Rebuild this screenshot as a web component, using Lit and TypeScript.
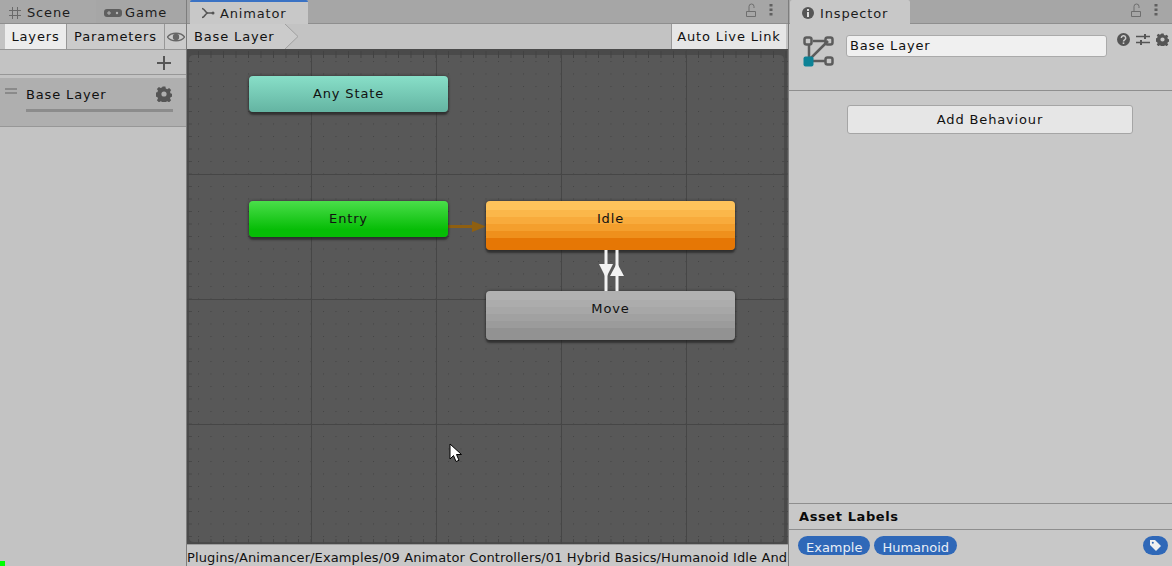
import { css, html, LitElement, svg } from "lit";
import { customElement } from "lit/decorators.js";

const gearIcon = (size: number) => html`
  <svg width="${size}" height="${size}" viewBox="0 0 16 16">
    <path
      fill="#555"
      fill-rule="evenodd"
      d="M6.600 0.500h2.800l.4 2 1.500.7 1.800-1.100 2 2-1.100 1.800.7 1.500 2 .4v2.800l-2 .4-.7 1.500 1.100 1.800-2 2-1.800-1.100-1.500.7-.4 2H6.600l-.4-2-1.500-.7-1.800 1.100-2-2 1.100-1.800-.7-1.500-2-.4V6.600l2-.4.7-1.500-1.100-1.800 2-2 1.800 1.100 1.500-.7zM8 5.400a2.600 2.600 0 1 0 0 5.200 2.600 2.600 0 0 0 0-5.200z"
    ></path>
  </svg>
`;

const lockIcon = html`
  <svg width="12" height="14" viewBox="0 0 12 14">
    <path d="M1.500 8.500h9v5h-9z M4 8V3.500a2.500 2.500 0 0 1 5 0V5" fill="none" stroke="#6e6e6e" stroke-width="1"></path>
  </svg>
`;

const dotsIcon = html`
  <svg width="4" height="12" viewBox="0 0 4 12">
    <rect x="0.500" y="0" width="3" height="2.500" fill="#5f5f5f"></rect>
    <rect x="0.500" y="4.500" width="3" height="2.500" fill="#5f5f5f"></rect>
    <rect x="0.500" y="9" width="3" height="2.500" fill="#5f5f5f"></rect>
  </svg>
`;

@customElement("graph-canvas")
class GraphCanvas extends LitElement {
  static styles = css`
    :host {
      display: block;
      position: relative;
      flex: 1;
      min-height: 0;
      background: #585858;
      overflow: hidden;
    }

    svg.layer {
      position: absolute;
      inset: 0;
      width: 100%;
      height: 100%;
    }

    .node {
      position: absolute;
      display: flex;
      justify-content: center;
      box-sizing: border-box;
      border-radius: 4px;
      color: #111;
      font-size: 13px;
      line-height: 15px;
      box-shadow: 0 3px 2px rgba(30, 30, 30, 0.6), 0 0 3px rgba(30, 30, 30, 0.7);
    }

    .any {
      left: 62px;
      top: 26px;
      width: 199px;
      height: 36px;
      padding-top: 10px;
      background: linear-gradient(#88dfc8, #64b4a2);
    }

    .entry {
      left: 62px;
      top: 151px;
      width: 199px;
      height: 36px;
      padding-top: 10px;
      background: linear-gradient(#4ade4a, #06bd06 80%);
    }

    .idle {
      left: 299px;
      top: 151px;
      width: 249px;
      height: 49px;
      padding-top: 10px;
      background: linear-gradient(
        #fec35b 0 18%,
        #fbb74a 18% 33%,
        #f8ab3c 33% 47%,
        #f49f2d 47% 61%,
        #ef901c 61% 75%,
        #e67705 75% 100%
      );
    }

    .move {
      left: 299px;
      top: 241px;
      width: 249px;
      height: 49px;
      padding-top: 10px;
      background: linear-gradient(
        #b1b1b1 0 18%,
        #acacac 18% 33%,
        #a7a7a7 33% 47%,
        #a1a1a1 47% 61%,
        #9b9b9b 61% 75%,
        #929292 75% 100%
      );
    }

    .cursor {
      position: absolute;
      left: 262px;
      top: 393px;
    }
  `;

  render() {
    return html`
      <svg class="layer" aria-hidden="true">
        <defs>
          <pattern id="minor" x="10" y="10" width="12.500" height="12.500" patternUnits="userSpaceOnUse">
            <rect x="1" y="1" width="1" height="1" fill="#414141"></rect>
          </pattern>
          <pattern id="ticks-x" x="11" y="0" width="12.500" height="494" patternUnits="userSpaceOnUse">
            <rect x="0" y="1" width="1" height="7" fill="#424242"></rect>
            <rect x="0" y="489" width="1" height="5" fill="#484848"></rect>
          </pattern>
          <pattern id="ticks-y" x="0" y="11" width="600" height="12.500" patternUnits="userSpaceOnUse">
            <rect x="0" y="0" width="5" height="1" fill="#484848"></rect>
            <rect x="595" y="0" width="5" height="1" fill="#484848"></rect>
          </pattern>
        </defs>
        <path
          fill-rule="evenodd"
          d="M0 0h600v494H0zM7 5Q2 5 2 10V487Q2 492 7 492H592Q597 492 597 487V10Q597 5 592 5z"
          fill="#4a4a4a"
        ></path>
        <rect width="100%" height="100%" fill="url(#minor)"></rect>
        <rect width="100%" height="100%" fill="url(#ticks-x)"></rect>
        <rect width="100%" height="100%" fill="url(#ticks-y)"></rect>
        ${[124, 249, 374, 499].map((x) => svg`<rect x=${x} y="0" width="1" height="494" fill="#464646"></rect>`)}
        ${[124, 249, 374].map((y) => svg`<rect x="0" y=${y} width="600" height="1" fill="#464646"></rect>`)}
        <path d="M261 176.500h26" stroke="#8f5f10" stroke-width="3" fill="none"></path>
        <path d="M285 171l14 5.500-14 5.500z" fill="#8f5f10"></path>
      </svg>
      <div class="node any">Any State</div>
      <div class="node entry">Entry</div>
      <div class="node idle">Idle</div>
      <div class="node move">Move</div>
      <svg class="layer" aria-hidden="true">
        <rect x="417.500" y="200" width="3" height="41" fill="#f2f2f2"></rect>
        <path d="M412 214h14l-7 14z" fill="#f2f2f2"></path>
        <rect x="428.500" y="200" width="3" height="41" fill="#f2f2f2"></rect>
        <path d="M423 226h14l-7-13z" fill="#f2f2f2"></path>
      </svg>
      <svg class="cursor" width="14" height="20" viewBox="0 0 14 20" aria-hidden="true">
        <path d="M1 1v15l3.500-3.500 2.500 6 3-1.200-2.500-5.800h5z" fill="#fff" stroke="#000" stroke-width="1"></path>
      </svg>
    `;
  }
}

@customElement("app-root")
export default class AppRoot extends LitElement {
  static styles = css`
    :host {
      display: grid;
      grid-template-columns: 186px 603px 1fr;
      width: 1172px;
      height: 566px;
      overflow: hidden;
      position: relative;
      background: #c3c3c3;
      color: #111;
      font-family: "DejaVu Sans", sans-serif;
      font-size: 13px;
      letter-spacing: 0.85px;
    }

    .tabbar {
      display: flex;
      height: 24px;
      background: #a6a6a6;
      box-sizing: border-box;
      border-bottom: 1px solid #8e8e8e;
      align-items: stretch;
    }

    .left {
      display: flex;
      flex-direction: column;
    }

    .tab {
      display: flex;
      align-items: center;
      gap: 5px;
      color: #1c1c1c;
      line-height: 15px;
    }

    .tab.scene {
      padding: 2px 0 0 8px;
      width: 96px;
      box-sizing: border-box;
      background: #a8a8a8;
    }

    .tab.game {
      padding: 2px 0 0 8px;
      gap: 3px;
    }

    .tab.active {
      background: #c8c8c8;
      box-sizing: border-box;
      height: 24px;
      margin-bottom: -1px;
      border-radius: 2px 2px 0 0;
    }

    .tab.blue {
      border-top: 2px solid #3a72c4;
    }

    .subtabs {
      display: flex;
      height: 26px;
      box-sizing: border-box;
      padding-left: 5px;
      background: #c3c3c3;
      border-bottom: 1px solid #979797;
    }

    .subtab {
      display: flex;
      align-items: center;
      justify-content: center;
      box-sizing: border-box;
      border-right: 1px solid #979797;
      background: #cbcbcb;
      line-height: 15px;
    }

    .subtab.on {
      width: 62px;
      background: #ececec;
    }

    .subtab.params {
      width: 98px;
    }

    .subtab.eye {
      flex: 1;
      border-right: none;
    }

    .addrow {
      display: flex;
      justify-content: flex-end;
      align-items: center;
      height: 25px;
      padding: 2px 14px 0 0;
      box-sizing: border-box;
      border-bottom: 1px solid #979797;
    }

    .layer-row {
      display: grid;
      grid-template-columns: 26px 1fr 22px;
      grid-template-rows: 31px 3px;
      height: 52px;
      box-sizing: border-box;
      background: linear-gradient(#c3c3c3 0 3px, #afafaf 3px);
      border-bottom: 1px solid #979797;
      padding: 3px 13px 0 0;
    }

    .grip {
      width: 12px;
      height: 2px;
      margin: 10px 0 0 5px;
      border-top: 2px solid #8a8a8a;
      border-bottom: 2px solid #8a8a8a;
    }

    .layer-name {
      padding-top: 9px;
      line-height: 15px;
      grid-column: 2;
    }

    .layer-gear {
      padding-top: 8px;
      display: flex;
      justify-content: flex-end;
      margin-right: 1px;
    }

    .layer-bar {
      grid-column: 2 / 4;
      height: 3px;
      background: #8c8c8c;
    }

    .center {
      display: flex;
      flex-direction: column;
      border-left: 1px solid #7d7d7d;
      border-right: 1px solid #7d7d7d;
      min-width: 0;
    }

    .animator-tab {
      width: 118px;
      margin-left: 3px;
      padding-left: 11px;
    }

    .spacer {
      flex: 1;
    }

    .tools {
      display: flex;
      align-items: center;
      gap: 12px;
      padding: 0 15px 3px 0;
    }

    .right .tools {
      padding-right: 14px;
    }

    .crumbs {
      display: flex;
      height: 26px;
      box-sizing: border-box;
      background: #c3c3c3;
      border-bottom: 1px solid #4b4b4b;
    }

    .crumb {
      display: flex;
      align-items: center;
      padding-left: 7px;
      width: 98px;
      box-sizing: border-box;
      background: #cbcbcb;
      line-height: 15px;
    }

    .crumb-arrow {
      display: block;
    }

    .live {
      width: 115px;
      display: flex;
      align-items: center;
      justify-content: center;
      background: #e6e6e6;
      box-sizing: border-box;
      border-left: 1px solid #9a9a9a;
      margin-right: 2px;
      line-height: 15px;
    }

    .path {
      height: 22px;
      box-sizing: border-box;
      background: #c8c8c8;
      border-top: 1px solid #9e9e9e;
      white-space: nowrap;
      overflow: hidden;
      line-height: 25px;
      letter-spacing: 0.12px;
    }

    .right {
      display: flex;
      flex-direction: column;
      background: #c8c8c8;
      min-width: 0;
    }

    .inspector-tab {
      width: 120px;
      padding: 2px 0 0 11px;
      margin-left: 1px;
    }

    .head {
      display: flex;
      height: 67px;
      box-sizing: border-box;
      padding: 11px 0 0 14px;
      border-bottom: 1px solid #8e8e8e;
    }

    .field {
      width: 261px;
      height: 22px;
      margin-left: 11px;
      padding-left: 3px;
      box-sizing: border-box;
      background: #f0f0f0;
      border: 1px solid #aaa;
      border-radius: 3px;
      line-height: 19px;
    }

    .head-icons {
      display: flex;
      align-items: flex-start;
      gap: 6px;
      margin: -2px 0 0 10px;
    }

    .body {
      flex: 1;
      padding: 14px 0 0 58px;
    }

    .add {
      width: 286px;
      height: 29px;
      display: flex;
      align-items: center;
      justify-content: center;
      box-sizing: border-box;
      background: #e6e6e6;
      border: 1px solid #a5a5a5;
      border-radius: 3px;
      line-height: 15px;
    }

    .labels-title {
      height: 27px;
      box-sizing: border-box;
      padding-left: 10px;
      border-top: 1px solid #8e8e8e;
      border-bottom: 1px solid #8e8e8e;
      font-weight: bold;
      line-height: 25px;
      color: #0a0a0a;
      letter-spacing: 0.6px;
    }

    .labels {
      display: flex;
      align-items: flex-start;
      gap: 4px;
      height: 36px;
      box-sizing: border-box;
      padding: 6px 4px 0 9px;
    }

    .pill {
      height: 19px;
      padding: 0 8px;
      border-radius: 10px;
      background: #2f68b8;
      color: #e8eef6;
      line-height: 24px;
      letter-spacing: 0;
    }

    .tag {
      margin-left: auto;
      width: 25px;
      height: 19px;
      display: flex;
      align-items: center;
      justify-content: center;
      border-radius: 10px;
      background: #2f68b8;
    }

    .marker {
      position: absolute;
      left: 0;
      bottom: 0;
      width: 5px;
      height: 5px;
      background: #00ff00;
    }
  `;

  render() {
    return html`
      <div class="left">
        <div class="tabbar">
          <div class="tab scene">
            <svg width="14" height="14" viewBox="0 0 14 14">
              <path d="M4.500 1v12M9.500 1v12M1 4.500h12M1 9.500h12" stroke="#6a6a6a" stroke-width="1" fill="none"></path>
            </svg>
            Scene
          </div>
          <div class="tab game">
            <svg width="18" height="12" viewBox="0 0 18 12">
              <rect x="0" y="2" width="18" height="8" rx="3" fill="#5f5f5f"></rect>
              <path d="M3 6h4M5 4v4" stroke="#b5b5b5" stroke-width="1"></path>
              <circle cx="13" cy="6" r="1.200" fill="#b5b5b5"></circle>
            </svg>
            Game
          </div>
        </div>
        <div class="subtabs">
          <div class="subtab on">Layers</div>
          <div class="subtab params">Parameters</div>
          <div class="subtab eye">
            <svg width="18" height="12" viewBox="0 0 18 12">
              <path d="M0.500 6C4 1 14 1 17.500 6 14 11 4 11 0.500 6z" fill="none" stroke="#666" stroke-width="1.300"></path>
              <circle cx="9" cy="6" r="3.200" fill="#666"></circle>
            </svg>
          </div>
        </div>
        <div class="addrow">
          <svg width="16" height="16" viewBox="0 0 16 16">
            <path d="M8 1v14M1 8h14" stroke="#555" stroke-width="2" fill="none"></path>
          </svg>
        </div>
        <div class="layer-row">
          <div class="grip"></div>
          <div class="layer-name">Base Layer</div>
          <div class="layer-gear">${gearIcon(16)}</div>
          <div class="layer-bar"></div>
        </div>
      </div>

      <div class="center">
        <div class="tabbar">
          <div class="tab active blue animator-tab">
            <svg width="14" height="14" viewBox="0 0 14 14">
              <path d="M1 2.500C4 2.500 4 7 7 7 4 7 4 11.500 1 11.500M7 7h6" stroke="#555" stroke-width="1.500" fill="none"></path>
              <circle cx="12" cy="7" r="1.500" fill="#555"></circle>
            </svg>
            Animator
          </div>
          <div class="spacer"></div>
          <div class="tools">${lockIcon}${dotsIcon}</div>
        </div>
        <div class="crumbs">
          <div class="crumb">Base Layer</div>
          <svg class="crumb-arrow" width="14" height="25" viewBox="0 0 14 25">
            <path d="M0 0L13 12.500 0 25z" fill="#cbcbcb"></path>
            <path d="M0 0L13 12.500 0 25" fill="none" stroke="#a0a0a0"></path>
          </svg>
          <div class="spacer"></div>
          <div class="live">Auto Live Link</div>
        </div>
        <graph-canvas></graph-canvas>
        <div class="path">Plugins/Animancer/Examples/09 Animator Controllers/01 Hybrid Basics/Humanoid Idle And</div>
      </div>

      <div class="right">
        <div class="tabbar">
          <div class="tab active inspector-tab">
            <svg width="14" height="14" viewBox="0 0 14 14">
              <circle cx="7" cy="7" r="6" fill="#555"></circle>
              <rect x="6" y="6" width="2" height="5" fill="#ddd"></rect>
              <rect x="6" y="3" width="2" height="2" fill="#ddd"></rect>
            </svg>
            Inspector
          </div>
          <div class="spacer"></div>
          <div class="tools">${lockIcon}${dotsIcon}</div>
        </div>
        <div class="head">
          <svg width="32" height="32" viewBox="0 0 32 32">
            <path d="M6 10V25L25 6M10 6h12M10 26h12" stroke="#5c5c5c" stroke-width="2.500" fill="none"></path>
            <rect x="1.500" y="2.500" width="7" height="7" rx="2" fill="none" stroke="#5c5c5c" stroke-width="2.500"></rect>
            <rect x="22.500" y="2.500" width="7" height="7" rx="2" fill="none" stroke="#5c5c5c" stroke-width="2.500"></rect>
            <rect x="22.500" y="22.500" width="7" height="7" rx="2" fill="none" stroke="#5c5c5c" stroke-width="2.500"></rect>
            <rect x="0.500" y="21.500" width="10" height="10" rx="2" fill="#0d8296"></rect>
          </svg>
          <div class="field">Base Layer</div>
          <div class="head-icons">
            <svg width="13" height="13" viewBox="0 0 13 13">
              <circle cx="6.500" cy="6.500" r="6.500" fill="#555"></circle>
              <path d="M4.300 5a2.200 2.200 0 1 1 3.300 1.900c-.8.5-1.100.8-1.100 1.500" stroke="#ccc" stroke-width="1.500" fill="none"></path>
              <rect x="5.700" y="9.400" width="1.600" height="1.600" fill="#ccc"></rect>
            </svg>
            <svg width="14" height="13" viewBox="0 0 14 13">
              <path d="M0 3.500h14M0 9.500h14" stroke="#555" stroke-width="1.500"></path>
              <rect x="8" y="1" width="2" height="5" fill="#555"></rect>
              <rect x="4" y="7" width="2" height="5" fill="#555"></rect>
            </svg>
            ${gearIcon(13)}
          </div>
        </div>
        <div class="body">
          <div class="add">Add Behaviour</div>
        </div>
        <div class="labels-title">Asset Labels</div>
        <div class="labels">
          <div class="pill">Example</div>
          <div class="pill">Humanoid</div>
          <div class="tag">
            <svg width="13" height="13" viewBox="0 0 13 13">
              <path d="M1 1h5l6 6-5 5-6-6z" fill="#f0f0f0"></path>
              <circle cx="3.800" cy="3.800" r="1" fill="#2f68b8"></circle>
            </svg>
          </div>
        </div>
      </div>
      <div class="marker"></div>
    `;
  }
}
